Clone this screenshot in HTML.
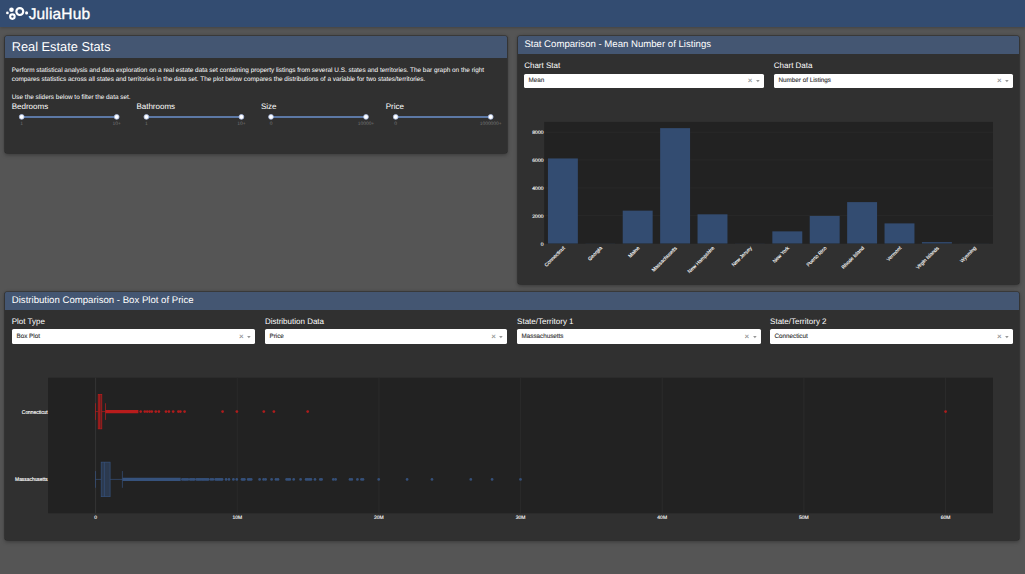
<!DOCTYPE html>
<html><head><meta charset="utf-8"><title>Real Estate Stats</title>
<style>
*{box-sizing:border-box}
html,body{margin:0;padding:0}
body{width:1025px;height:574px;overflow:hidden;position:relative;background:#555555;font-family:"Liberation Sans",Arial,sans-serif;color:#fff;text-rendering:geometricPrecision}
.abs{position:absolute;white-space:nowrap;line-height:1}
#nav{position:absolute;left:0;top:0;width:1025px;height:26.8px;background:#334c71;box-shadow:0 1px 3px rgba(0,0,0,.22)}
.card{position:absolute;background:#303030;border-radius:1.5px;box-shadow:0 0 0 .6px rgba(0,0,0,.4),0 0 3px rgba(0,0,0,.2),0 1.5px 4.5px rgba(0,0,0,.3);overflow:hidden}
.card .hd{position:absolute;left:0;top:0;right:0;background:#445672}
.h4{font-size:12.8px}
.h5{font-size:9.6px}
.lbl{font-size:8px}
.txt{font-size:6.42px}
.dd{position:absolute;height:14.6px;background:#fff;border-radius:1.6px;color:#333;font-size:6.3px;-webkit-text-stroke:.12px #333}
.dd span{position:absolute;left:4.5px;top:4.5px;line-height:1;white-space:nowrap}
.dd i{position:absolute;font-style:normal;color:#999;line-height:1}
.dd i.x{right:11.4px;top:4px;font-size:8px}
.dd svg.v{left:auto;right:4.1px;top:7.2px}
.dd.t span{top:3.9px}.dd.t i.x{top:3px}.dd.t svg.v{top:6.3px}
.trk{position:absolute;height:2px;background:#5c78a5;border-radius:1px}
.hn{position:absolute;width:5.6px;height:5.6px;margin:.2px;border-radius:50%;background:#fff;box-shadow:0 0 0 .5px #b8c6de}
.mk{position:absolute;font-size:4.9px;color:#787878;line-height:1;white-space:nowrap;transform:translateX(-50%)}
svg{position:absolute;left:0;top:0;overflow:visible}
svg text{font-family:"Liberation Sans",Arial,sans-serif;text-rendering:geometricPrecision}
</style></head><body>
<div id="nav"></div>
<svg id="logo" width="100" height="27" viewBox="0 0 100 27">
 <circle cx="7.4" cy="12.9" r="1.35" fill="#fff"/>
 <circle cx="11.5" cy="9.8" r="2.3" fill="#fff"/>
 <circle cx="12.4" cy="16.6" r="2.25" fill="none" stroke="#fff" stroke-width="2.1"/>
 <circle cx="19.8" cy="11.55" r="3.45" fill="none" stroke="#fff" stroke-width="2.2"/>
 <circle cx="26.6" cy="12.9" r="1.55" fill="#fff"/>
</svg>
<div class="abs" id="brand" style="left:28px;text-indent:.7px;top:5.5px;font-size:15.5px;letter-spacing:.15px;line-height:17px;-webkit-text-stroke:.35px #fff">JuliaHub</div>

<!-- left card -->
<div class="card" id="c1" style="left:5.3px;top:36px;width:501.9px;height:117.4px">
 <div class="hd" style="height:22px"></div>
</div>
<div class="abs h4" id="t1" style="left:11.7px;top:38.9px;line-height:15px">Real Estate Stats</div>
<div class="abs txt" id="d1" style="left:11.7px;top:66.8px;line-height:7px">Perform statistical analysis and data exploration on a real estate data set containing property listings from several U.S. states and territories. The bar graph on the right</div>
<div class="abs txt" id="d2" style="left:11.7px;top:75.9px;line-height:7px">compares statistics across all states and territories in the data set. The plot below compares the distributions of a variable for two states/territories.</div>
<div class="abs txt" id="d3" style="left:11.7px;top:93.9px;line-height:7px">Use the sliders below to filter the data set.</div>
<div class="abs lbl" style="left:11.7px;top:102.1px;line-height:10px">Bedrooms</div>
<div class="abs lbl" style="left:136.4px;top:102.1px;line-height:10px">Bathrooms</div>
<div class="abs lbl" style="left:261px;top:102.1px;line-height:10px">Size</div>
<div class="abs lbl" style="left:385.7px;top:102.1px;line-height:10px">Price</div>
<div class="trk" style="left:21.7px;top:115.9px;width:95px"></div>
<div class="trk" style="left:146.4px;top:115.9px;width:95px"></div>
<div class="trk" style="left:271px;top:115.9px;width:95px"></div>
<div class="trk" style="left:395.7px;top:115.9px;width:95px"></div>




<div class="mk" style="left:21.7px;top:122.5px">1</div><div class="mk" style="left:116.7px;top:122.5px">10+</div>
<div class="mk" style="left:146.4px;top:122.5px">1</div><div class="mk" style="left:241.4px;top:122.5px">10+</div>
<div class="mk" style="left:271px;top:122.5px">0</div><div class="mk" style="left:366px;top:122.5px">10000+</div>
<div class="mk" style="left:395.7px;top:122.5px">0</div><div class="mk" style="left:490.7px;top:122.5px">1000000+</div>

<svg width="520" height="160" fill="#fff" stroke="#a9bde4" stroke-width="0.8"><circle cx="21.7" cy="116.9" r="2.4"/><circle cx="116.7" cy="116.9" r="2.4"/><circle cx="146.4" cy="116.9" r="2.4"/><circle cx="241.4" cy="116.9" r="2.4"/><circle cx="271.0" cy="116.9" r="2.4"/><circle cx="366.0" cy="116.9" r="2.4"/><circle cx="395.7" cy="116.9" r="2.4"/><circle cx="490.7" cy="116.9" r="2.4"/></svg>
<!-- right card -->
<div class="card" id="c2" style="left:518px;top:36px;width:501.4px;height:248.4px">
 <div class="hd" style="height:18px"></div>
</div>
<div class="abs h5" id="t2" style="left:524.4px;top:37.5px;line-height:13px">Stat Comparison - Mean Number of Listings</div>
<div class="abs lbl" style="left:524.2px;top:60.6px;line-height:10px">Chart Stat</div>
<div class="abs lbl" style="left:773.8px;top:60.6px;line-height:10px">Chart Data</div>
<div class="dd t" style="left:524px;top:74px;width:239.8px;height:14px"><span>Mean</span><i class="x">×</i><svg class="v" width="4" height="3" viewBox="0 0 4 3"><path d="M0.1 0h3.6L1.9 2.3z" fill="#969696"/></svg></div>
<div class="dd t" style="left:774px;top:74px;width:239px;height:14px"><span>Number of Listings</span><i class="x">×</i><svg class="v" width="4" height="3" viewBox="0 0 4 3"><path d="M0.1 0h3.6L1.9 2.3z" fill="#969696"/></svg></div>

<!-- bottom card -->
<div class="card" id="c3" style="left:5px;top:292px;width:1014.4px;height:247.8px">
 <div class="hd" style="height:18px"></div>
</div>
<div class="abs h5" id="t3" style="left:11.8px;top:294.3px;line-height:13px">Distribution Comparison - Box Plot of Price</div>
<div class="abs lbl" style="left:11.7px;top:316.8px;line-height:10px">Plot Type</div>
<div class="abs lbl" style="left:264.9px;top:316.8px;line-height:10px">Distribution Data</div>
<div class="abs lbl" style="left:517.1px;top:316.8px;line-height:10px">State/Territory 1</div>
<div class="abs lbl" style="left:770.1px;top:316.8px;line-height:10px">State/Territory 2</div>
<div class="dd" style="left:12px;top:329px;width:243px"><span>Box Plot</span><i class="x">×</i><svg class="v" width="4" height="3" viewBox="0 0 4 3"><path d="M0.1 0h3.6L1.9 2.3z" fill="#969696"/></svg></div>
<div class="dd" style="left:265px;top:329px;width:242.4px"><span>Price</span><i class="x">×</i><svg class="v" width="4" height="3" viewBox="0 0 4 3"><path d="M0.1 0h3.6L1.9 2.3z" fill="#969696"/></svg></div>
<div class="dd" style="left:517px;top:329px;width:243.6px"><span>Massachusetts</span><i class="x">×</i><svg class="v" width="4" height="3" viewBox="0 0 4 3"><path d="M0.1 0h3.6L1.9 2.3z" fill="#969696"/></svg></div>
<div class="dd" style="left:770px;top:329px;width:243px"><span>Connecticut</span><i class="x">×</i><svg class="v" width="4" height="3" viewBox="0 0 4 3"><path d="M0.1 0h3.6L1.9 2.3z" fill="#969696"/></svg></div>
<svg id="charts" width="1025" height="574" viewBox="0 0 1025 574">
<rect x="544.2" y="121.9" width="448.8" height="121.8" fill="#222222"/>
<line x1="544.2" x2="993.0" y1="215.65" y2="215.65" stroke="#2e2e2e" stroke-width="0.6"/>
<line x1="544.2" x2="993.0" y1="187.8" y2="187.8" stroke="#2e2e2e" stroke-width="0.6"/>
<line x1="544.2" x2="993.0" y1="159.95" y2="159.95" stroke="#2e2e2e" stroke-width="0.6"/>
<line x1="544.2" x2="993.0" y1="132.1" y2="132.1" stroke="#2e2e2e" stroke-width="0.6"/>
<text x="543.6" y="245.8" font-size="5.1" fill="#fff" stroke="#fff" stroke-width="0.1" text-anchor="end">0</text>
<text x="543.6" y="217.95" font-size="5.1" fill="#fff" stroke="#fff" stroke-width="0.1" text-anchor="end">2000</text>
<text x="543.6" y="190.1" font-size="5.1" fill="#fff" stroke="#fff" stroke-width="0.1" text-anchor="end">4000</text>
<text x="543.6" y="162.25" font-size="5.1" fill="#fff" stroke="#fff" stroke-width="0.1" text-anchor="end">6000</text>
<text x="543.6" y="134.4" font-size="5.1" fill="#fff" stroke="#fff" stroke-width="0.1" text-anchor="end">8000</text>
<rect x="547.94" y="158.45" width="29.92" height="85.05" fill="#334c71"/>
<text transform="translate(563.9,247.1) rotate(-45)" font-size="5" fill="#fff" stroke="#fff" stroke-width="0.1" text-anchor="end" y="1.8">Connecticut</text>
<rect x="585.34" y="243.39" width="29.92" height="0.11" fill="#334c71"/>
<text transform="translate(601.3,247.1) rotate(-45)" font-size="5" fill="#fff" stroke="#fff" stroke-width="0.1" text-anchor="end" y="1.8">Georgia</text>
<rect x="622.74" y="210.64" width="29.92" height="32.86" fill="#334c71"/>
<text transform="translate(638.7,247.1) rotate(-45)" font-size="5" fill="#fff" stroke="#fff" stroke-width="0.1" text-anchor="end" y="1.8">Maine</text>
<rect x="660.14" y="128.13" width="29.92" height="115.37" fill="#334c71"/>
<text transform="translate(676.1,247.1) rotate(-45)" font-size="5" fill="#fff" stroke="#fff" stroke-width="0.1" text-anchor="end" y="1.8">Massachusetts</text>
<rect x="697.54" y="214.33" width="29.92" height="29.17" fill="#334c71"/>
<text transform="translate(713.5,247.1) rotate(-45)" font-size="5" fill="#fff" stroke="#fff" stroke-width="0.1" text-anchor="end" y="1.8">New Hampshire</text>
<rect x="734.94" y="243.4" width="29.92" height="0.1" fill="#334c71"/>
<text transform="translate(750.9,247.1) rotate(-45)" font-size="5" fill="#fff" stroke="#fff" stroke-width="0.1" text-anchor="end" y="1.8">New Jersey</text>
<rect x="772.34" y="231.36" width="29.92" height="12.14" fill="#334c71"/>
<text transform="translate(788.3,247.1) rotate(-45)" font-size="5" fill="#fff" stroke="#fff" stroke-width="0.1" text-anchor="end" y="1.8">New York</text>
<rect x="809.74" y="215.9" width="29.92" height="27.6" fill="#334c71"/>
<text transform="translate(825.7,247.1) rotate(-45)" font-size="5" fill="#fff" stroke="#fff" stroke-width="0.1" text-anchor="end" y="1.8">Puerto Rico</text>
<rect x="847.14" y="202.1" width="29.92" height="41.4" fill="#334c71"/>
<text transform="translate(863.1,247.1) rotate(-45)" font-size="5" fill="#fff" stroke="#fff" stroke-width="0.1" text-anchor="end" y="1.8">Rhode Island</text>
<rect x="884.54" y="223.39" width="29.92" height="20.11" fill="#334c71"/>
<text transform="translate(900.5,247.1) rotate(-45)" font-size="5" fill="#fff" stroke="#fff" stroke-width="0.1" text-anchor="end" y="1.8">Vermont</text>
<rect x="921.94" y="242.11" width="29.92" height="1.39" fill="#334c71"/>
<text transform="translate(937.9,247.1) rotate(-45)" font-size="5" fill="#fff" stroke="#fff" stroke-width="0.1" text-anchor="end" y="1.8">Virgin Islands</text>
<rect x="959.34" y="243.43" width="29.92" height="0.07" fill="#334c71"/>
<text transform="translate(975.3,247.1) rotate(-45)" font-size="5" fill="#fff" stroke="#fff" stroke-width="0.1" text-anchor="end" y="1.8">Wyoming</text>
<rect x="48.1" y="377.7" width="944.9" height="135.6" fill="#222222"/>
<line x1="237.25" x2="237.25" y1="377.7" y2="513.3" stroke="#303030" stroke-width="0.6"/>
<line x1="378.9" x2="378.9" y1="377.7" y2="513.3" stroke="#303030" stroke-width="0.6"/>
<line x1="520.55" x2="520.55" y1="377.7" y2="513.3" stroke="#303030" stroke-width="0.6"/>
<line x1="662.2" x2="662.2" y1="377.7" y2="513.3" stroke="#303030" stroke-width="0.6"/>
<line x1="803.85" x2="803.85" y1="377.7" y2="513.3" stroke="#303030" stroke-width="0.6"/>
<line x1="945.5" x2="945.5" y1="377.7" y2="513.3" stroke="#303030" stroke-width="0.6"/>
<line x1="95.6" x2="95.6" y1="377.7" y2="513.3" stroke="#3c3c3c" stroke-width="0.7"/>
<text x="95.6" y="518.6" font-size="5" fill="#fff" stroke="#fff" stroke-width="0.1" text-anchor="middle">0</text>
<text x="237.25" y="518.6" font-size="5" fill="#fff" stroke="#fff" stroke-width="0.1" text-anchor="middle">10M</text>
<text x="378.9" y="518.6" font-size="5" fill="#fff" stroke="#fff" stroke-width="0.1" text-anchor="middle">20M</text>
<text x="520.55" y="518.6" font-size="5" fill="#fff" stroke="#fff" stroke-width="0.1" text-anchor="middle">30M</text>
<text x="662.2" y="518.6" font-size="5" fill="#fff" stroke="#fff" stroke-width="0.1" text-anchor="middle">40M</text>
<text x="803.85" y="518.6" font-size="5" fill="#fff" stroke="#fff" stroke-width="0.1" text-anchor="middle">50M</text>
<text x="945.5" y="518.6" font-size="5" fill="#fff" stroke="#fff" stroke-width="0.1" text-anchor="middle">60M</text>
<text transform="translate(47.7,413.6) scale(1,1.12)" font-size="4.9" fill="#ffffff" stroke="#fff" stroke-width="0.12" text-anchor="end">Connecticut</text>
<text transform="translate(47.7,481.4) scale(1,1.12)" font-size="4.9" fill="#ffffff" stroke="#fff" stroke-width="0.12" text-anchor="end">Massachusetts</text>
<g stroke="#b91c1c" stroke-width="0.7" fill="none">
<line x1="95.5" x2="98.2" y1="411.6" y2="411.6"/>
<line x1="101.8" x2="105.5" y1="411.6" y2="411.6"/>
<line x1="95.5" x2="95.5" y1="403.25" y2="419.95"/>
<line x1="105.5" x2="105.5" y1="403.25" y2="419.95"/>
<rect x="98.2" y="394.35" width="3.6" height="34.5" fill="rgba(185,28,28,0.5)"/>
<line x1="99.4" x2="99.4" y1="394.35" y2="428.85"/>
</g>
<line x1="105.5" x2="138.4" y1="411.6" y2="411.6" stroke="#b91c1c" stroke-width="3.3"/>
<g fill="#b01c1c">
<circle cx="140.7" cy="411.6" r="1.35"/>
<circle cx="144.8" cy="411.6" r="1.35"/>
<circle cx="147.2" cy="411.6" r="1.35"/>
<circle cx="149.6" cy="411.6" r="1.35"/>
<circle cx="151.8" cy="411.6" r="1.35"/>
<circle cx="155.8" cy="411.6" r="1.35"/>
<circle cx="158.9" cy="411.6" r="1.35"/>
<circle cx="166" cy="411.6" r="1.35"/>
<circle cx="168.9" cy="411.6" r="1.35"/>
<circle cx="173.2" cy="411.6" r="1.35"/>
<circle cx="178.4" cy="411.6" r="1.35"/>
<circle cx="180.4" cy="411.6" r="1.35"/>
<circle cx="184.6" cy="411.6" r="1.35"/>
<circle cx="222.6" cy="411.6" r="1.35"/>
<circle cx="236.9" cy="411.6" r="1.35"/>
<circle cx="263.8" cy="411.6" r="1.35"/>
<circle cx="273.9" cy="411.6" r="1.35"/>
<circle cx="307.7" cy="411.6" r="1.35"/>
<circle cx="945.6" cy="411.6" r="1.35"/>
</g>
<g stroke="#36527c" stroke-width="0.7" fill="none">
<line x1="95.5" x2="101.2" y1="479.4" y2="479.4"/>
<line x1="110.1" x2="122.4" y1="479.4" y2="479.4"/>
<line x1="95.5" x2="95.5" y1="471.05" y2="487.75"/>
<line x1="122.4" x2="122.4" y1="471.05" y2="487.75"/>
<rect x="101.2" y="462.15" width="8.9" height="34.5" fill="rgba(54,82,124,0.5)"/>
<line x1="104.4" x2="104.4" y1="462.15" y2="496.65"/>
</g>
<line x1="122.4" x2="180.7" y1="479.4" y2="479.4" stroke="#36527c" stroke-width="3.3"/>
<g fill="#35507a">
<circle cx="182.4" cy="479.4" r="1.35"/>
<circle cx="183.75" cy="479.4" r="1.35"/>
<circle cx="185.1" cy="479.4" r="1.35"/>
<circle cx="186.45" cy="479.4" r="1.35"/>
<circle cx="187.8" cy="479.4" r="1.35"/>
<circle cx="190.2" cy="479.4" r="1.35"/>
<circle cx="191.5" cy="479.4" r="1.35"/>
<circle cx="192.8" cy="479.4" r="1.35"/>
<circle cx="194.1" cy="479.4" r="1.35"/>
<circle cx="196.6" cy="479.4" r="1.35"/>
<circle cx="197.9" cy="479.4" r="1.35"/>
<circle cx="199.2" cy="479.4" r="1.35"/>
<circle cx="200.5" cy="479.4" r="1.35"/>
<circle cx="201.8" cy="479.4" r="1.35"/>
<circle cx="203.1" cy="479.4" r="1.35"/>
<circle cx="204.4" cy="479.4" r="1.35"/>
<circle cx="205.7" cy="479.4" r="1.35"/>
<circle cx="207" cy="479.4" r="1.35"/>
<circle cx="208.3" cy="479.4" r="1.35"/>
<circle cx="211" cy="479.4" r="1.35"/>
<circle cx="212.8" cy="479.4" r="1.35"/>
<circle cx="215.6" cy="479.4" r="1.35"/>
<circle cx="216.9" cy="479.4" r="1.35"/>
<circle cx="218.2" cy="479.4" r="1.35"/>
<circle cx="219.5" cy="479.4" r="1.35"/>
<circle cx="220.8" cy="479.4" r="1.35"/>
<circle cx="222.1" cy="479.4" r="1.35"/>
<circle cx="226.1" cy="479.4" r="1.35"/>
<circle cx="229" cy="479.4" r="1.35"/>
<circle cx="233.4" cy="479.4" r="1.35"/>
<circle cx="236.8" cy="479.4" r="1.35"/>
<circle cx="242" cy="479.4" r="1.35"/>
<circle cx="243.2" cy="479.4" r="1.35"/>
<circle cx="244.4" cy="479.4" r="1.35"/>
<circle cx="248.2" cy="479.4" r="1.35"/>
<circle cx="249.7" cy="479.4" r="1.35"/>
<circle cx="251.2" cy="479.4" r="1.35"/>
<circle cx="259.6" cy="479.4" r="1.35"/>
<circle cx="263.6" cy="479.4" r="1.35"/>
<circle cx="265.6" cy="479.4" r="1.35"/>
<circle cx="271.6" cy="479.4" r="1.35"/>
<circle cx="276" cy="479.4" r="1.35"/>
<circle cx="278" cy="479.4" r="1.35"/>
<circle cx="286.6" cy="479.4" r="1.35"/>
<circle cx="288.2" cy="479.4" r="1.35"/>
<circle cx="289.8" cy="479.4" r="1.35"/>
<circle cx="293.7" cy="479.4" r="1.35"/>
<circle cx="300.6" cy="479.4" r="1.35"/>
<circle cx="306.1" cy="479.4" r="1.35"/>
<circle cx="307.7" cy="479.4" r="1.35"/>
<circle cx="309.3" cy="479.4" r="1.35"/>
<circle cx="310.9" cy="479.4" r="1.35"/>
<circle cx="315" cy="479.4" r="1.35"/>
<circle cx="320.3" cy="479.4" r="1.35"/>
<circle cx="321.6" cy="479.4" r="1.35"/>
<circle cx="333.3" cy="479.4" r="1.35"/>
<circle cx="335.6" cy="479.4" r="1.35"/>
<circle cx="350" cy="479.4" r="1.35"/>
<circle cx="351.8" cy="479.4" r="1.35"/>
<circle cx="357.4" cy="479.4" r="1.35"/>
<circle cx="361.5" cy="479.4" r="1.35"/>
<circle cx="363" cy="479.4" r="1.35"/>
<circle cx="378.7" cy="479.4" r="1.35"/>
<circle cx="407.1" cy="479.4" r="1.35"/>
<circle cx="432" cy="479.4" r="1.35"/>
<circle cx="470.8" cy="479.4" r="1.35"/>
<circle cx="492.1" cy="479.4" r="1.35"/>
<circle cx="520.5" cy="479.4" r="1.35"/>
</g>
</svg>
</body></html>
